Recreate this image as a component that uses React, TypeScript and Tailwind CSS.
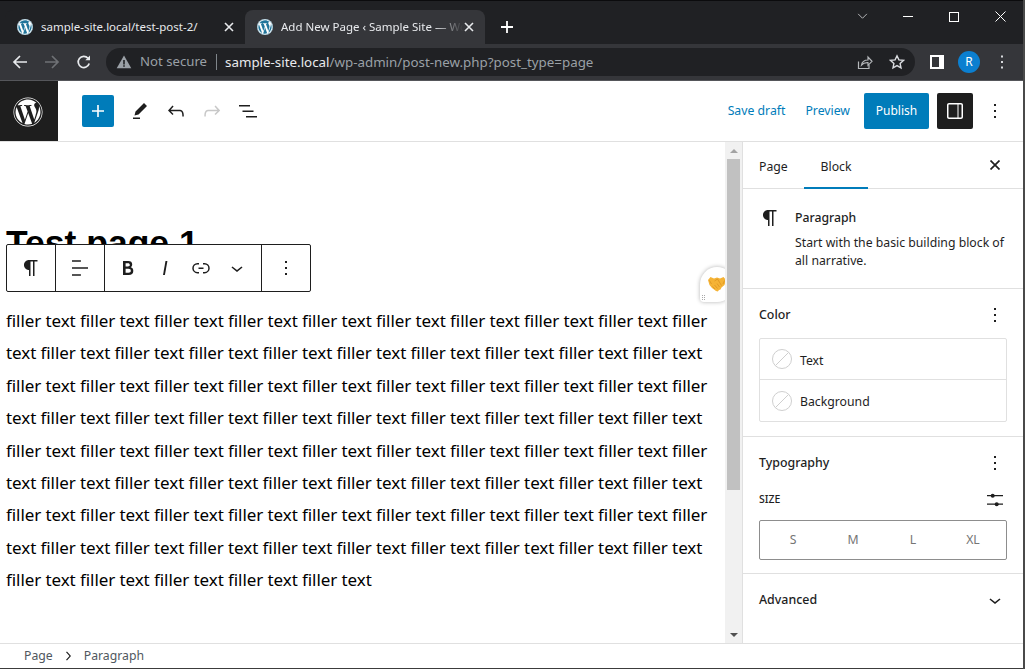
import React from "react";
import { FaWordpress } from "react-icons/fa";

const UI = "font-['Noto_Sans','Open_Sans',sans-serif]";

function G({ d, size = 24, cls = "" }: { d: string; size?: number; cls?: string }) {
  return (
    <svg viewBox="0 0 24 24" width={size} height={size} fill="currentColor" className={"shrink-0 " + cls}>
      <path d={d} />
    </svg>
  );
}

const P = {
  plus: "M18 11.2h-5.2V6h-1.6v5.2H6v1.6h5.2V18h1.6v-5.2H18z",
  edit: "m19 7-3-3-8.5 8.5-1 4 4-1L19 7Zm-7 11.5H5V20h7v-1.5Z",
  undo: "M18.3 11.7c-.6-.6-1.4-.9-2.3-.9H6.7l2.9-3.3-1.1-1-4.5 5L8.5 16l1-1-2.7-2.7H16c.5 0 .9.2 1.3.5 1 1 1 3.4 1 4.5v.3h1.5v-.2c0-1.5 0-4.3-1.5-5.7z",
  redo: "M15.6 6.5l-1.1 1 2.9 3.3H8c-.9 0-1.7.3-2.3.9-1.4 1.5-1.4 4.2-1.4 5.6v.2h1.5v-.3c0-1.1 0-3.5 1-4.5.3-.3.7-.5 1.3-.5h9.2L14.5 15l1.1 1.1 4.6-4.6-4.6-5z",
  list: "M3 6h11v1.5H3V6Zm3.5 5.5h11V13h-11v-1.5ZM21 17H10v1.5h11V17Z",
  layout: "M18 4H6c-1.1 0-2 .9-2 2v12c0 1.1.9 2 2 2h12c1.1 0 2-.9 2-2V6c0-1.1-.9-2-2-2zM6 18.5c-.3 0-.5-.2-.5-.5V6c0-.3.2-.5.5-.5h8.5v13H6zm12.5-.5c0 .3-.2.5-.5.5h-2.5v-13H18c.3 0 .5.2.5.5v12z",
  more: "M13 19h-2v-2h2v2zm0-6h-2v-2h2v2zm0-6h-2V5h2v2z",
  para: "m9.99609 14v-.2251l.00391.0001v6.225h1.5v-14.5h2.5v14.5h1.5v-14.5h3v-1.5h-8.50391c-2.76142 0-5 2.23858-5 5 0 2.7614 2.23858 5 5 5z",
  align: "M4 19.8h8.9v-1.5H4v1.5zm8.9-15.6H4v1.5h8.9V4.2zm-8.9 7v1.5h16v-1.5H4z",
  bold: "M14.7 11.3c1-.6 1.5-1.6 1.5-3 0-2.3-1.3-3.4-4-3.4H7v14h5.8c1.4 0 2.5-.3 3.3-1 .8-.7 1.2-1.7 1.2-2.9.1-1.9-.8-3.1-2.6-3.7zm-5.1-4h2.3c.6 0 1.1.1 1.4.4.3.3.5.7.5 1.2s-.2 1-.5 1.2c-.3.3-.8.4-1.4.4H9.6V7.3zm4.6 9c-.4.3-1 .4-1.7.4H9.6v-3.9h2.9c.7 0 1.3.2 1.7.5.4.3.6.8.6 1.5s-.2 1.2-.6 1.5z",
  italic: "M12.5 5L10 19h1.9l2.5-14z",
  link: "M10 17.389H8.444A5.194 5.194 0 1 1 8.444 7H10v1.5H8.444a3.694 3.694 0 0 0 0 7.389H10v1.5ZM14 7h1.556a5.194 5.194 0 0 1 0 10.39H14v-1.5h1.556a3.694 3.694 0 0 0 0-7.39H14V7Zm-4.5 6h5v-1.5h-5V13Z",
  chevron: "M17.5 11.6L12 16l-5.5-4.4.9-1.2L12 14l4.5-3.6 1 1.2z",
  chevronR: "M10.6 6L9.4 7l4.6 5-4.6 5 1.2 1 5.4-6z",
};

function TabX() {
  return (
    <svg viewBox="0 0 12 12" width="12" height="12" className="shrink-0 text-[#e8eaed]" stroke="currentColor" strokeWidth="1.6">
      <path d="M2 2l8 8M10 2l-8 8" />
    </svg>
  );
}

function Tab({ title, active }: { title: string; active?: boolean }) {
  return (
    <div className={"flex h-[34px] w-[240px] items-center rounded-t-lg pl-[12px] pr-[10px] " + (active ? "bg-[#35363a]" : "bg-[#202124]")}>
      <span className="flex h-[16px] w-[16px] shrink-0 items-center justify-center rounded-full bg-white text-[#21759b]">
        <FaWordpress size={16} />
      </span>
      <span className={"ml-[8px] flex-1 overflow-hidden whitespace-nowrap text-[11.5px] text-[#e8eaed] " + (active ? "[mask-image:linear-gradient(to_right,black_85%,transparent)]" : "")}>{title}</span>
      <TabX />
    </div>
  );
}

function ChromeBar() {
  return (
    <div className={"shrink-0 " + UI}>
      <div className="flex h-[44px] items-end border-t border-[#0b0b0d] bg-[#202124] pl-[5px]">
        <Tab title="sample-site.local/test-post-2/" />
        <Tab title="Add New Page ‹ Sample Site — WordPress" active />
        <svg viewBox="0 0 14 14" width="14" height="14" className="mb-[10px] ml-[15px] text-white" stroke="currentColor" strokeWidth="1.8">
          <path d="M7 1v12M1 7h12" />
        </svg>
        <div className="flex-1" />
        <div className="flex h-[31px] items-center self-start text-white">
          <svg viewBox="0 0 12 8" width="11" height="7" fill="none" stroke="#c8cacc" strokeWidth="1" className="mr-[35px]"><path d="M1 1l5 5 5-5" /></svg>
          <div className="mr-[36px] h-px w-[10px] bg-white" />
          <div className="mr-[36px] h-[10px] w-[10px] border border-white" />
          <svg viewBox="0 0 11 11" width="11" height="11" stroke="white" strokeWidth="1" className="mr-[17px]"><path d="M.5.5l10 10M10.5.5l-10 10" /></svg>
        </div>
      </div>
      <div className="flex h-[37px] items-center border-b border-[#55565a] bg-[#35363a]">
        <svg viewBox="0 0 16 16" width="16" height="16" fill="none" stroke="#e8eaed" strokeWidth="1.7" className="ml-[12px]"><path d="M15 8H2M8 2L2 8l6 6" /></svg>
        <svg viewBox="0 0 16 16" width="16" height="16" fill="none" stroke="#6f7175" strokeWidth="1.7" className="ml-[16px]"><path d="M1 8h13M8 2l6 6-6 6" /></svg>
        <svg viewBox="0 0 16 16" width="16" height="16" fill="none" stroke="#e8eaed" strokeWidth="1.7" className="ml-[16px]"><path d="M13.2 9.5A5.6 5.6 0 1 1 12 4.2" /><path d="M14 1.5v4.7H9.3" fill="#e8eaed" stroke="none" /></svg>
        <div className="ml-[14px] flex h-[28px] w-[809px] items-center rounded-full bg-[#202124] pl-[10px]">
          <svg viewBox="0 0 16 16" width="16" height="16" fill="#9aa0a6"><path d="M8 1.5L.7 14.2h14.6L8 1.5z" /><path d="M7.2 6h1.6v4.4H7.2zM7.2 11.2h1.6v1.5H7.2z" fill="#202124" /></svg>
          <span className="ml-[8px] text-[13.2px] text-[#9aa0a6]">Not secure</span>
          <div className="ml-[9px] h-[16px] w-px bg-[#80868b]" />
          <span className="ml-[8px] whitespace-nowrap text-[13.35px] text-[#9aa0a6]"><span className="text-[#e8eaed]">sample-site.local</span>/wp-admin/post-new.php?post_type=page</span>
          <div className="flex-1" />
          <svg viewBox="0 0 16 16" width="16" height="16" fill="none" stroke="#b5b8bb" strokeWidth="1.2" className="mr-[16px]"><path d="M1.5 7.5V14.5h10.5V11" /><path d="M4.5 11c.6-3.5 3.3-5 6.5-5V3l4 4.3-4 4V8.700C8 8.500 6 9.300 4.500 11z" /></svg>
          <svg viewBox="0 0 16 16" width="16" height="16" fill="none" stroke="#dadce0" strokeWidth="1.4" className="mr-[10px]"><path d="M8 1.800l1.900 4.100 4.500.5-3.300 3 .9 4.400L8 11.600l-4 2.200.9-4.400-3.300-3 4.500-.5z" /></svg>
        </div>
        <div className="ml-[15px] flex h-[14px] w-[14px] justify-start border-[2px] border-white"><div className="ml-[7px] h-full w-[3px] bg-white" /></div>
        <div className="ml-[14px] flex h-[22px] w-[22px] items-center justify-center rounded-full bg-[#0b7fd0] text-[12px] text-white">R</div>
        <G d={P.more} size={22} cls="ml-[11px] text-[#e8eaed]" />
      </div>
    </div>
  );
}

function WpHeader() {
  return (
    <div className={"flex h-[61px] shrink-0 items-center border-b border-[#e0e0e0] bg-white " + UI}>
      <div className="flex h-[60px] w-[58px] items-center justify-center self-start bg-[#1e1e1e] pr-[2px] pt-[2px] text-white">
        <FaWordpress size={30} />
      </div>
      <div className="ml-[24px] flex h-[32px] w-[32px] items-center justify-center rounded-[2px] bg-[#007cba] text-white">
        <G d={P.plus} />
      </div>
      <G d={P.edit} cls="ml-[14px] text-[#1e1e1e]" />
      <G d={P.undo} cls="ml-[12px] text-[#1e1e1e]" />
      <G d={P.redo} cls="ml-[12px] text-[#c8c8c8]" />
      <G d={P.list} cls="ml-[12px] text-[#1e1e1e]" />
      <div className="flex-1" />
      <span className="text-[12.25px] text-[#007cba]">Save draft</span>
      <span className="ml-[20px] text-[12.25px] text-[#007cba]">Preview</span>
      <div className="ml-[14px] flex h-[36px] w-[65px] items-center justify-center rounded-[2px] bg-[#007cba] text-[12px] text-white">Publish</div>
      <div className="ml-[8px] flex h-[36px] w-[36px] items-center justify-center rounded-[2px] bg-[#1e1e1e] text-white">
        <G d={P.layout} />
      </div>
      <G d={P.more} cls="ml-[10px] mr-[16px] text-[#1e1e1e]" />
    </div>
  );
}

const A = "filler text filler text filler text filler text filler text filler text filler text filler text filler text filler";
const B = "text filler text filler text filler text filler text filler text filler text filler text filler text filler text";
const LINES = [A, B, A, B, A, B, A, B, "filler text filler text filler text filler text filler text"];

function BlockToolbar() {
  const sep = "flex h-full items-center border-r border-[#1e1e1e]";
  return (
    <div className="absolute left-[6px] top-[102px] flex h-[48px] w-[305px] rounded-[2px] border border-[#1e1e1e] bg-white text-[#1e1e1e]">
      <div className={sep + " w-[49px] justify-center"}><G d={P.para} /></div>
      <div className={sep + " w-[49px] justify-center"}><G d={P.align} /></div>
      <div className={sep + " w-[157px] pl-[11px]"}>
        <G d={P.bold} />
        <G d={P.italic} cls="ml-[13px]" />
        <G d={P.link} cls="ml-[12px]" />
        <G d={P.chevron} cls="ml-[12px]" />
      </div>
      <div className="flex h-full flex-1 items-center justify-center"><G d={P.more} /></div>
    </div>
  );
}

function Scrollbar() {
  return (
    <div className="flex w-[17px] shrink-0 flex-col items-center bg-[#f1f1f1] px-[2px]">
      <div className="flex h-[17px] w-full items-center justify-center">
        <div className="h-0 w-0 border-x-[4px] border-b-[4px] border-x-transparent border-b-[#a3a3a3]" />
      </div>
      <div className="h-[331px] w-full bg-[#c1c1c1]" />
      <div className="flex-1" />
      <div className="flex h-[17px] w-full items-center justify-center">
        <div className="h-0 w-0 border-x-[4px] border-t-[4px] border-x-transparent border-t-[#505050]" />
      </div>
    </div>
  );
}

function Helper() {
  return (
    <div className="absolute left-[700px] top-[125px] flex h-[35px] w-[34px] items-center justify-center rounded-[50%_50%_50%_4px] bg-white shadow-[0_0_4px_rgba(0,0,0,0.3)]">
      <svg viewBox="0 0 18 16" width="18" height="16" className="-mt-[2px]">
        <path d="M0 4L2.500 1 6 2.500 9 1.500l3 1L15.500 1 18 4l-1.500 5-3 2.500-1 2-1.500.5-1.200 1.500L8 15 6 13.500 4 12 1.500 9z" fill="#f5b335" />
        <path d="M6.500 5L9.500 3l4 6.500M4.500 10.500L7 13M6.500 9l3 3.500M9 7.500l2.500 3.500M1.500 4.500l2 3.500M16.500 4.500L15 8" stroke="#d98f1e" strokeWidth="0.7" fill="none" />
      </svg>
      <div className="absolute bottom-[2px] left-[2px] grid grid-cols-2 gap-[1px]">
        {[0, 1, 2, 3, 4, 5].map((i) => <div key={i} className="h-px w-px bg-[#a8a8a8]" />)}
      </div>
    </div>
  );
}

function Editor() {
  return (
    <div className="relative min-w-0 flex-1 overflow-hidden bg-white">
      <div className="pl-[6px] pt-[82px] font-['Liberation_Sans',sans-serif] text-[35.5px] font-bold leading-[38px] text-black">Test page 1</div>
      <div className="pl-[6px] pt-[43px] font-['Noto_Sans','Open_Sans',sans-serif] text-[17px] leading-[32.4px] tracking-[-0.08px] text-black">
        {LINES.map((l, i) => (
          <div key={i} className="whitespace-nowrap">{l}</div>
        ))}
      </div>
      <BlockToolbar />
      <Helper />
    </div>
  );
}

function ColorRow({ label, last }: { label: string; last?: boolean }) {
  return (
    <div className={"flex h-[41px] items-center pl-[12px] " + (last ? "" : "border-b border-[#e0e0e0]")}>
      <svg viewBox="0 0 20 20" width="20" height="20" fill="none" stroke="#cfcfcf" strokeWidth="1">
        <circle cx="10" cy="10" r="9.500" />
        <path d="M3.500 16.500L16.500 3.500" />
      </svg>
      <span className="ml-[8px] pt-[4px] text-[12.25px] text-[#1e1e1e]">{label}</span>
    </div>
  );
}

function Sidebar() {
  return (
    <div className={"flex w-[281px] shrink-0 flex-col border-l border-[#e0e0e0] bg-white text-[#1e1e1e] " + UI}>
      <div className="flex h-[47px] shrink-0 border-b border-[#e0e0e0] pl-[16px]">
        <span className="w-[45px] pt-[15px] text-[12.25px] leading-[20px]">Page</span>
        <div className="flex h-[47px] w-[64px] justify-center border-b-2 border-[#007cba] pt-[15px] text-[12.25px] leading-[20px]">Block</div>
        <div className="flex-1" />
        <svg viewBox="0 0 10 10" width="10" height="10" stroke="#1e1e1e" strokeWidth="1.7" className="mr-[23px] mt-[18px] shrink-0">
          <path d="M.5.5l9 9M9.500.5l-9 9" />
        </svg>
      </div>
      <div className="flex h-[100px] shrink-0 border-b border-[#e0e0e0] pl-[16px] pt-[19px]">
        <G d={P.para} cls="-ml-[1px] -mt-[2px] mr-[13px]" />
        <div>
          <div className="text-[12.25px] font-medium leading-[20px]">Paragraph</div>
          <div className="mt-[6px] w-[214px] text-[12.25px] leading-[18px]">Start with the basic building block of all narrative.</div>
        </div>
      </div>
      <div className="h-[148px] shrink-0 border-b border-[#e0e0e0] px-[16px] pt-[14px]">
        <div className="flex h-[24px] items-center justify-between">
          <span className="text-[12.4px] font-medium">Color</span>
          <G d={P.more} />
        </div>
        <div className="mt-[11px] w-[248px] rounded-[2px] border border-[#e0e0e0]">
          <ColorRow label="Text" />
          <ColorRow label="Background" last />
        </div>
      </div>
      <div className="h-[137px] shrink-0 border-b border-[#e0e0e0] px-[16px] pt-[14px]">
        <div className="flex h-[24px] items-center justify-between">
          <span className="text-[12.4px] font-medium">Typography</span>
          <G d={P.more} />
        </div>
        <div className="mt-[13px] flex h-[24px] items-center justify-between">
          <span className="text-[10.5px] font-medium">SIZE</span>
          <svg viewBox="0 0 24 24" width="24" height="24" fill="#1e1e1e">
            <path d="M4 7h16v1.300H4zM4 15.500h16v1.300H4z" />
            <circle cx="9.700" cy="7.700" r="2" /><circle cx="13.700" cy="16.200" r="2" />
          </svg>
        </div>
        <div className="mt-[8px] flex h-[40px] w-[248px] items-center rounded-[2px] border border-[#8d8d8d] px-[3px] text-[12.25px] text-[#757575]">
          {["S", "M", "L", "XL"].map((s) => (
            <span key={s} className="flex-1 text-center">{s}</span>
          ))}
        </div>
      </div>
      <div className="flex h-[52px] shrink-0 items-center justify-between px-[16px]">
        <span className="text-[12.4px] font-medium">Advanced</span>
        <G d={P.chevron} />
      </div>
    </div>
  );
}

function Footer() {
  return (
    <div className={"flex h-[25px] shrink-0 items-center border-t border-[#e0e0e0] bg-white pl-[24px] text-[12.25px] text-[#50575e] " + UI}>
      <span>Page</span>
      <G d={P.chevronR} size={18} cls="ml-[6px] mr-[7px] text-[#1e1e1e]" />
      <span>Paragraph</span>
    </div>
  );
}

export default function App() {
  return (
    <div className="flex h-[669px] w-[1025px] overflow-hidden bg-[#4a4a4a]">
      <div className="flex h-full w-[1023px] shrink-0 flex-col bg-[#3c3c3c]">
        <ChromeBar />
        <div className="flex min-h-0 flex-1 flex-col pb-px">
          <WpHeader />
          <div className="flex min-h-0 flex-1">
            <Editor />
            <Scrollbar />
            <Sidebar />
          </div>
          <Footer />
        </div>
      </div>
    </div>
  );
}
